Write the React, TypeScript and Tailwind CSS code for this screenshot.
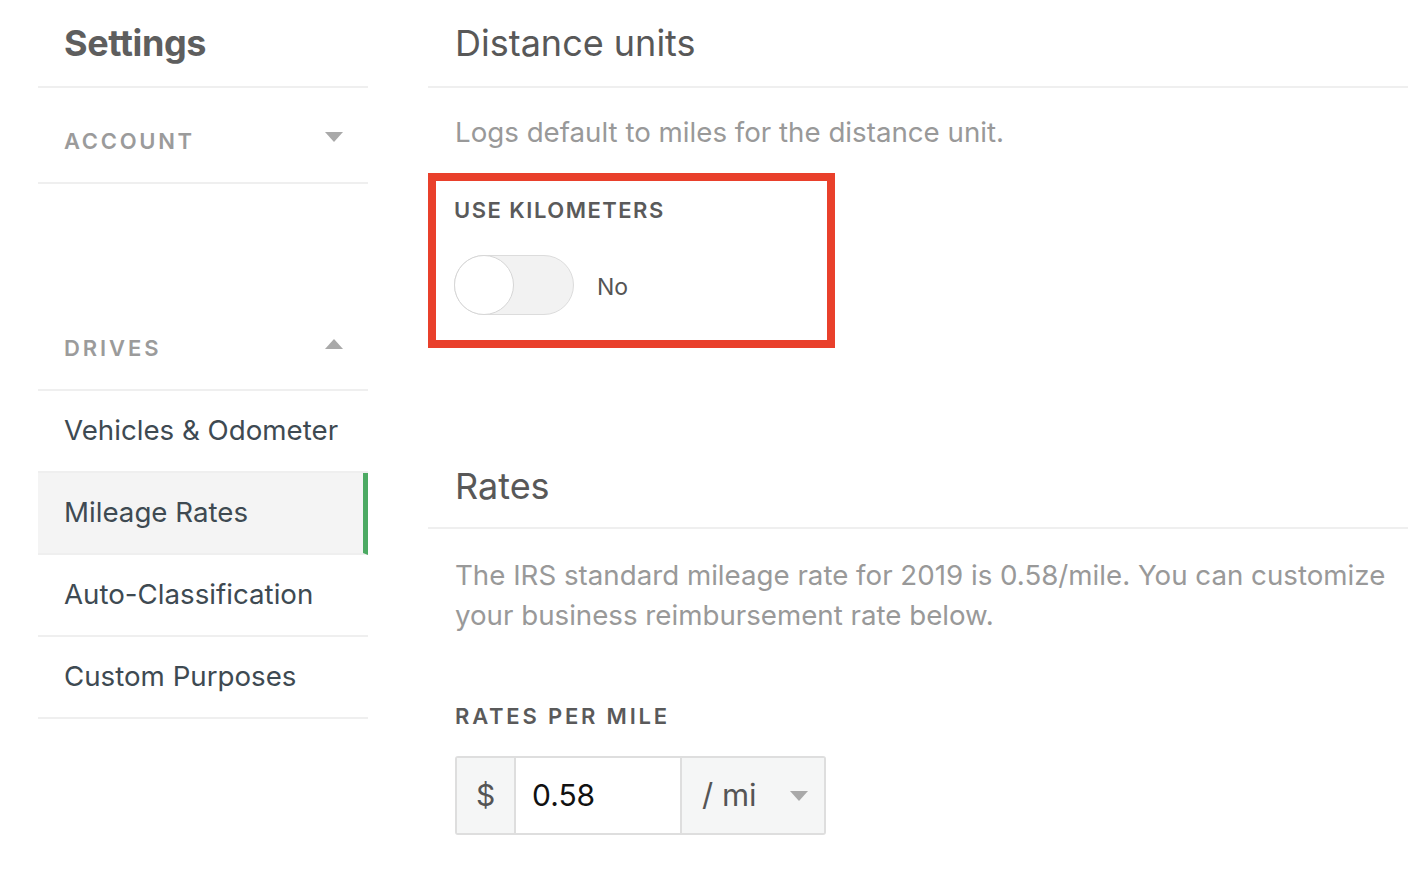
import React from "react";

const font = { fontFamily: 'Inter, "Noto Sans", sans-serif' };

function Tri({ up }: { up?: boolean }) {
  return (
    <svg width="18" height="10" viewBox="0 0 18 10" className="block">
      {up ? <polygon points="0,10 18,10 9,0" fill="#a9a9a9" /> : <polygon points="0,0 18,0 9,10" fill="#a9a9a9" />}
    </svg>
  );
}

export default function App() {
  const items = ["Vehicles & Odometer", "Mileage Rates", "Auto-Classification", "Custom Purposes"];
  return (
    <div className="w-[1424px] h-[874px] bg-white flex overflow-hidden" style={font}>
      {/* Sidebar */}
      <div className="ml-[38px] w-[330px] flex flex-col">
        <div className="h-[88px] border-b-2 border-[#efefef] flex items-center pl-[26px]">
          <span className="text-[36px] font-bold text-[#5e5e5e] tracking-[-0.4px]">Settings</span>
        </div>
        <div className="h-[96px] border-b-2 border-[#efefef] flex items-center justify-between pl-[26px] pr-[25px]">
          <span className="mt-[11px] text-[22px] leading-[28px] font-semibold tracking-[2.7px] text-[#9b9b9b]">ACCOUNT</span>
          <span className="mt-[3px]">
            <Tri />
          </span>
        </div>
        <div className="h-[112px]" />
        <div className="h-[95px] border-b-2 border-[#efefef] flex items-center justify-between pl-[26px] pr-[25px]">
          <span className="mt-[11px] text-[22px] leading-[28px] font-semibold tracking-[2.9px] text-[#9b9b9b]">DRIVES</span>
          <span className="mt-[3px]">
            <Tri up />
          </span>
        </div>
        {items.map((t) => (
          <div
            key={t}
            className={
              "h-[82px] border-b-2 border-[#efefef] flex items-center pl-[26px] text-[27.7px] text-[#3e4a52] " +
              (t === "Mileage Rates" ? "bg-[#f4f4f4] border-r-[5px] border-r-[#4caa63]" : "")
            }
          >
            {t}
          </div>
        ))}
      </div>

      {/* Main */}
      <div className="ml-[60px] w-[980px] flex flex-col">
        <div className="h-[88px] border-b-2 border-[#efefef] flex items-center pl-[27px]">
          <span className="text-[36px] text-[#585858]">Distance units</span>
        </div>
        <div className="pl-[27px] pt-[24px] text-[27.7px] text-[#999999] leading-[40px]">
          Logs default to miles for the distance unit.
        </div>
        <div className="mt-[21px] w-[407px] h-[175px] border-[8px] border-[#e9402b] pl-[18px] pt-[15px]">
          <div className="text-[22px] font-semibold tracking-[1.5px] text-[#5a5a5a] leading-[28px]">USE KILOMETERS</div>
          <div className="mt-[31px] flex items-center">
            <div className="relative w-[120px] h-[60px] rounded-full bg-[#f2f2f2] border border-[#dcdcdc]">
              <div className="absolute left-[-1px] top-[-1px] w-[60px] h-[60px] rounded-full bg-white border border-[#d6d6d6]" />
            </div>
            <span className="ml-[23px] mt-[5px] text-[23px] text-[#555555]">No</span>
          </div>
        </div>

        <div className="mt-[108px] h-[73px] border-b-2 border-[#efefef] flex items-center pl-[27px] pb-[11px]">
          <span className="text-[36px] text-[#585858]">Rates</span>
        </div>
        <div className="pl-[27px] pt-[26px] text-[27.7px] text-[#999999] leading-[40px] whitespace-nowrap">
          The IRS standard mileage rate for 2019 is 0.58/mile. You can customize
          <br />
          your business reimbursement rate below.
        </div>
        <div className="pl-[27px] mt-[67px] text-[22px] font-semibold tracking-[2.8px] text-[#5a5a5a] leading-[28px]">
          RATES PER MILE
        </div>
        <div className="ml-[27px] mt-[26px] w-[371px] h-[79px] flex border-2 border-[#dedede] rounded-[3px] overflow-hidden">
          <div className="w-[59px] bg-[#f5f6f6] border-r-2 border-[#dedede] flex items-center justify-center text-[30px] text-[#555555]">
            $
          </div>
          <div className="w-[164px] bg-white flex items-center pl-[16px] text-[30px] text-[#111111]">0.58</div>
          <div className="flex-1 bg-[#f5f6f6] border-l-2 border-[#dedede] flex items-center justify-between pl-[20px] pr-[16px]">
            <span className="text-[31px] text-[#555555]">/ mi</span>
            <Tri />
          </div>
        </div>
      </div>
    </div>
  );
}
